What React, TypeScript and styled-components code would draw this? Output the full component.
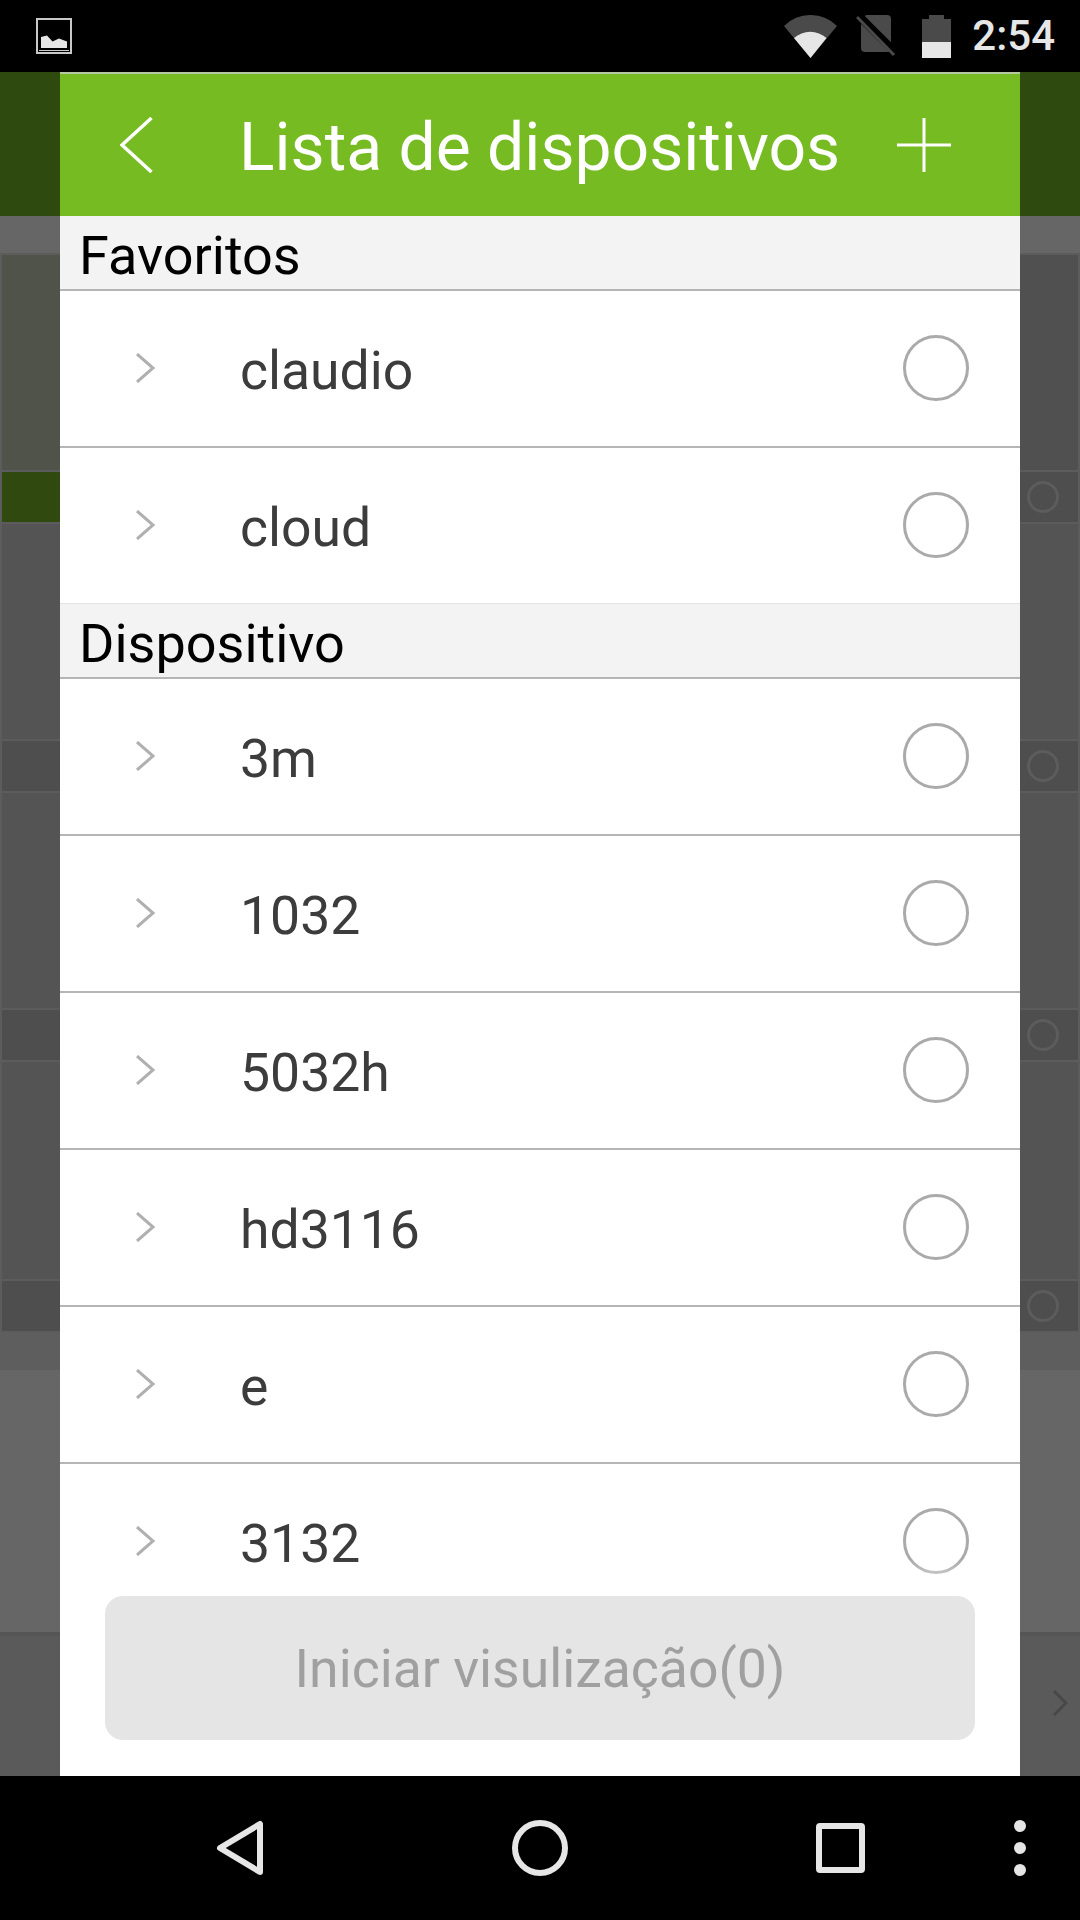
import styled, { createGlobalStyle } from "styled-components";

const GlobalStyle = createGlobalStyle`
    html, body {
        margin: 0;
        padding: 0;
        background: #000;
    }
    * {
        box-sizing: border-box;
    }
`;

const favorites = ["claudio", "cloud"];
const devices = ["3m", "1032", "5032h", "hd3116", "e", "3132"];

// dimmed list behind the dialog: plain block height, then its row
const backdropBlocks = [
    { height: 215, tinted: true },
    { height: 215, tinted: false },
    { height: 215, tinted: false },
    { height: 217, tinted: false },
];

function StatusBar() {
    return (
        <StatusWrapper>
            <svg width="36" height="36" viewBox="0 0 36 36">
                <rect x="1" y="1" width="34" height="34" fill="none" stroke="#c8c8c8" strokeWidth="2" />
                <path d="M5 30V19l6-1.500 5.500 6 6.500-3 8 3V30Z" fill="#e6e6e6" />
                <path d="M3 32.500H33" stroke="#c8c8c8" strokeWidth="1" />
            </svg>
            <StatusRight>
                <svg width="53" height="43" viewBox="0 0 53 43">
                    <path d="M26.500 43 0 11A37.400 37.400 0 0 1 53 11Z" fill="#4a4a4a" />
                    <path d="M26.500 43 10 23A24.300 24.300 0 0 1 42.500 23Z" fill="#e6e6e6" />
                </svg>
                <NoSimIcon width="40" height="42" viewBox="0 0 40 42">
                    <path d="M10 0H31a4 4 0 0 1 4 4V37H9a4 4 0 0 1-4-4V6Z" fill="#4a4a4a" />
                    <path d="M-2 -4 40 38" stroke="#000" strokeWidth="8" />
                    <path d="M1 2 38 40" stroke="#4a4a4a" strokeWidth="3" />
                </NoSimIcon>
                <BatteryIcon width="29" height="43" viewBox="0 0 29 43">
                    <path d="M7 0H22V4H29V27H0V4H7Z" fill="#4a4a4a" />
                    <rect x="0" y="27" width="29" height="16" fill="#e6e6e6" />
                </BatteryIcon>
                <Clock>2:54</Clock>
            </StatusRight>
        </StatusWrapper>
    );
}

function Backdrop() {
    return (
        <BackdropWrapper>
            <BackdropHeader />
            <BackdropTabs />
            <BackdropList>
                {backdropBlocks.map((block, i) => (
                    <div key={i}>
                        <BackdropBlock $height={block.height} $tinted={block.tinted} />
                        <BackdropRow $selected={block.tinted}>
                            <BackdropRadio />
                        </BackdropRow>
                    </div>
                ))}
            </BackdropList>
            <BackdropGap />
            <BackdropFill />
            <BackdropFooter>
                <svg width="16" height="28" viewBox="0 0 16 28">
                    <path d="M2 2 14 14 2 26" fill="none" stroke="#484848" strokeWidth="3" />
                </svg>
            </BackdropFooter>
        </BackdropWrapper>
    );
}

function DeviceRow({ name, last }: { name: string; last?: boolean }) {
    return (
        <Row $last={last}>
            <svg width="20" height="30" viewBox="0 0 20 30">
                <path d="M2 1 18 15 2 29" fill="none" stroke="#b0b0b0" strokeWidth="3" />
            </svg>
            <RowLabel>{name}</RowLabel>
            <Radio />
        </Row>
    );
}

function App() {
    return (
        <Screen>
            <GlobalStyle />
            <StatusBar />
            <Body>
                <Backdrop />
                <Dialog>
                    <DialogHeader>
                        <svg width="33" height="56" viewBox="0 0 33 56">
                            <path d="M31.500 1 2 28 31.500 55" fill="none" stroke="#fff" strokeWidth="3.500" />
                        </svg>
                        <DialogTitle>Lista de dispositivos</DialogTitle>
                        <svg width="56" height="56" viewBox="0 0 56 56">
                            <path d="M28 1V55M1 28H55" fill="none" stroke="#fff" strokeWidth="3" />
                        </svg>
                    </DialogHeader>
                    <DeviceList>
                        <SectionTitle>Favoritos</SectionTitle>
                        {favorites.map((name, i) => (
                            <DeviceRow key={name} name={name} last={i === favorites.length - 1} />
                        ))}
                        <SectionTitle>Dispositivo</SectionTitle>
                        {devices.map((name) => (
                            <DeviceRow key={name} name={name} />
                        ))}
                    </DeviceList>
                    <DialogFooter>
                        <StartButton>Iniciar visulização(0)</StartButton>
                    </DialogFooter>
                </Dialog>
            </Body>
            <NavBar>
                <NavBack width="52" height="60" viewBox="0 0 52 60">
                    <path d="M46 6V54L6 30Z" fill="none" stroke="#e6e6e6" strokeWidth="6" strokeLinejoin="round" />
                </NavBack>
                <NavHome />
                <NavRecent />
                <NavDots>
                    <span />
                    <span />
                    <span />
                </NavDots>
            </NavBar>
        </Screen>
    );
}

export default App;

const Screen = styled.div`
    width: 1080px;
    height: 1920px;
    display: flex;
    flex-direction: column;
    overflow: hidden;
    background: #000;
    font-family: Roboto, "Liberation Sans", sans-serif;
`;

const StatusWrapper = styled.div`
    height: 72px;
    flex: none;
    display: flex;
    align-items: center;
    justify-content: space-between;
    padding: 0 25px 0 36px;
    background: #000;
`;

const StatusRight = styled.div`
    display: flex;
    align-items: center;
`;

const NoSimIcon = styled.svg`
    margin-left: 19px;
`;

const BatteryIcon = styled.svg`
    margin-left: 26px;
`;

const Clock = styled.div`
    margin-left: 21px;
    color: #e6e6e6;
    font-size: 42px;
    font-weight: 500;
    line-height: 44px;
`;

const Body = styled.div`
    position: relative;
    flex: 1;
    min-height: 0;
`;

const BackdropWrapper = styled.div`
    height: 100%;
    display: flex;
    flex-direction: column;
    background: #666;
`;

const BackdropHeader = styled.div`
    height: 144px;
    background: #2f4a0f;
`;

const BackdropTabs = styled.div`
    height: 37px;
    background: #666;
`;

const BackdropList = styled.div`
    padding: 2px 2px 0;
    background: #5c5c5c;
`;

const BackdropBlock = styled.div<{ $height: number; $tinted: boolean }>`
    height: ${(p) => p.$height}px;
    background: ${(p) =>
        p.$tinted ? "linear-gradient(90deg, #50534a 50%, #505050 50%)" : "#545454"};
`;

const BackdropRow = styled.div<{ $selected: boolean }>`
    height: 50px;
    margin: 2px 0;
    display: flex;
    align-items: center;
    justify-content: flex-end;
    padding-right: 19px;
    background: ${(p) =>
        p.$selected ? "linear-gradient(90deg, #30490f 50%, #4e4e4e 50%)" : "#4e4e4e"};
`;

const BackdropRadio = styled.div`
    width: 32px;
    height: 32px;
    border: 3px solid #5c5c5c;
    border-radius: 50%;
`;

const BackdropGap = styled.div`
    height: 37px;
    background: #5e5e5e;
`;

const BackdropFill = styled.div`
    height: 266px;
    background: #666;
    border-bottom: 4px solid #555;
`;

const BackdropFooter = styled.div`
    flex: 1;
    display: flex;
    align-items: center;
    justify-content: flex-end;
    padding: 0 12px 6px 0;
    background: #5a5a5a;
`;

const Dialog = styled.div`
    position: absolute;
    top: 0;
    bottom: 0;
    left: 60px;
    right: 60px;
    display: flex;
    flex-direction: column;
    background: #fff;
`;

const DialogHeader = styled.div`
    height: 144px;
    flex: none;
    display: flex;
    align-items: center;
    padding: 0 68px 0 60px;
    border-top: 2px solid #b7c79f;
    background: #77bb22;
`;

const DialogTitle = styled.div`
    flex: 1;
    margin-left: 86px;
    padding-top: 5px;
    color: #fff;
    font-size: 66px;
    line-height: 70px;
    white-space: nowrap;
`;

const DeviceList = styled.div`
    position: relative;
    flex: 1;
    min-height: 0;
    overflow: hidden;

    &::after {
        content: "";
        position: absolute;
        left: 0;
        right: 0;
        bottom: 0;
        height: 36px;
        background: linear-gradient(rgba(255, 255, 255, 0), rgba(255, 255, 255, 0.8));
    }
`;

const SectionTitle = styled.div`
    height: 75px;
    padding: 5px 0 0 19px;
    display: flex;
    align-items: center;
    border-bottom: 2px solid #b5b5b5;
    background: #f3f3f3;
    color: #000;
    font-size: 54px;
`;

const Row = styled.div<{ $last?: boolean }>`
    height: ${(p) => (p.$last ? 156 : 157)}px;
    display: flex;
    align-items: center;
    padding: 0 51px 2px 75px;
    border-bottom: ${(p) => (p.$last ? "1px solid #e4e4e4" : "2px solid #b5b5b5")};
`;

const RowLabel = styled.div`
    flex: 1;
    margin-left: 85px;
    padding-top: 6px;
    color: #3c3c3c;
    font-size: 53.5px;
`;

const Radio = styled.div`
    width: 66px;
    height: 66px;
    border: 3px solid #aaa;
    border-radius: 50%;
`;

const DialogFooter = styled.div`
    height: 180px;
    flex: none;
    padding: 0 45px 36px;
    background: #fff;
`;

const StartButton = styled.div`
    height: 144px;
    display: flex;
    align-items: center;
    justify-content: center;
    border-radius: 18px;
    background: #e5e5e5;
    color: #a0a0a0;
    font-size: 53.5px;
`;

const NavBar = styled.div`
    height: 144px;
    flex: none;
    display: flex;
    align-items: center;
    padding-left: 214px;
    background: #000;
`;

const NavBack = styled.svg`
    flex: none;
`;

const NavHome = styled.div`
    width: 56px;
    height: 56px;
    margin-left: 246px;
    border: 6px solid #e6e6e6;
    border-radius: 50%;
`;

const NavRecent = styled.div`
    width: 49px;
    height: 50px;
    margin-left: 248px;
    border: 6px solid #e6e6e6;
    border-radius: 4px;
`;

const NavDots = styled.div`
    display: flex;
    flex-direction: column;
    gap: 10px;
    margin-left: 149px;

    span {
        display: block;
        width: 12px;
        height: 12px;
        border-radius: 50%;
        background: #e6e6e6;
    }
`;
